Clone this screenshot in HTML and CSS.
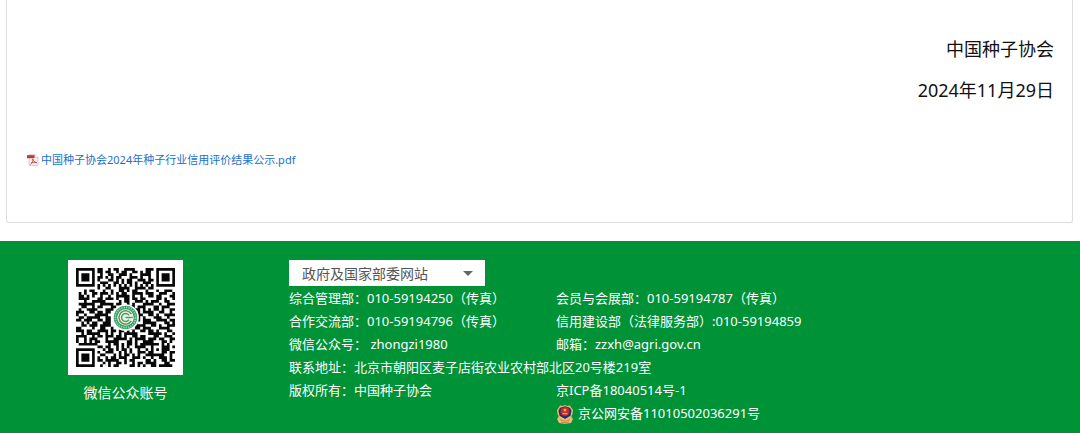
FILE: index.html
```html
<!DOCTYPE html>
<html lang="zh-CN">
<head>
<meta charset="utf-8">
<title>中国种子协会</title>
<link rel="stylesheet" href="styles.css">
</head>
<body>
<main class="article">
  <div class="signature">
    <p>中国种子协会</p>
    <p>2024年11月29日</p>
  </div>
  <a class="attachment" href="#pdf">
    <svg class="pdf-icon" viewBox="0 0 12 12" aria-hidden="true">
      <path d="M2 .5h6l3 3v8H2z" fill="#f5eeee" stroke="#c9c2c2" stroke-width=".7"/>
      <path d="M8 .5v3h3" fill="#fff" stroke="#c9c2c2" stroke-width=".7"/>
      <path d="M0 1.2h7.5v3H0z" fill="#b93a3a"/>
      <path d="M5.8 4.8c.5 2-.6 4.400-2.400 5.800M5.800 5c.4 2 2 3.600 4 3.700M3.800 9.200c1.800-1 3.800-1.300 6-.6" fill="none" stroke="#d0453f" stroke-width=".9"/>
    </svg>
    <span>中国种子协会2024年种子行业信用评价结果公示.pdf</span>
  </a>
</main>
<footer class="footer">
  <figure class="wechat">
    <svg class="qr" viewBox="-3 -3 43 43" role="img" aria-label="微信公众账号二维码">
      <path fill="#fff" d="M-3-3h43v43h-43z"/>
      <path id="modules" fill="#080808"/>
      <circle cx="18.500" cy="18.500" r="5" fill="#fff"/>
      <circle cx="18.500" cy="18.500" r="4.400" fill="#3a9c67"/>
      <circle cx="18.500" cy="18.500" r="3.800" fill="none" stroke="#a3d3b7" stroke-width=".6" stroke-dasharray=".5 .4"/>
      <circle cx="18.500" cy="18.500" r="3.100" fill="#eef7e9"/>
      <path d="M20.700 17.200a2.500 2.500 0 1 0 0 2.600M19.800 17.700a1.500 1.500 0 1 0 0 1.600M18.500 18.500h2.700" fill="none" stroke="#519b59" stroke-width=".55"/>
    </svg>
    <figcaption>微信公众账号</figcaption>
  </figure>
  <div class="info">
    <div class="picker">
      <select class="picker-box" aria-label="政府及国家部委网站">
        <option>政府及国家部委网站</option>
      </select>
    </div>
    <div class="contacts">
      <span>综合管理部：010-59194250（传真）</span>
      <span>会员与会展部：010-59194787（传真）</span>
      <span>合作交流部：010-59194796（传真）</span>
      <span>信用建设部（法律服务部）:010-59194859</span>
      <span>微信公众号： zhongzi1980</span>
      <span>邮箱：zzxh@agri.gov.cn</span>
      <span class="wide">联系地址：北京市朝阳区麦子店街农业农村部北区20号楼219室</span>
      <span>版权所有：中国种子协会</span>
      <a href="#icp">京ICP备18040514号-1</a>
      <a class="police" href="#beian">
        <svg class="badge" viewBox="0 0 18 20" aria-hidden="true">
          <path d="M3 12l-2 3 2 4 6 1 6-1 2-4-2-3z" fill="#e3b567"/>
          <path d="M9 1l2 1 3-.5 1.500 2.500 1.500 2-.5 4-2 4L9 17l-5.500-3-2-4L1 6l1.500-2L4 1.500 7 2z" fill="#e9bd76"/>
          <path d="M9 2.200l5 1.500 1.500 3-1 5L9 15l-5.500-3.300-1-5L4 3.700z" fill="#273064"/>
          <circle cx="9" cy="7.500" r="4.500" fill="#c62c2b"/>
          <path d="M9 4l.6 1.300 1.400.1-1 1 .3 1.400L9 7.100l-1.300.7.3-1.400-1-1 1.400-.1zM6.500 9h5v1.300h-5z" fill="#edb04f"/>
          <path d="M3 14.500c2 2.500 10 2.500 12 0l1 1.500-2 3H4l-2-3z" fill="#eec47c"/>
          <path d="M4 15.500c2 2 8 2 10 0M5 18c2 1 6 1 8 0" fill="none" stroke="#b5642d" stroke-width=".7"/>
        </svg>
        <span>京公网安备11010502036291号</span>
      </a>
    </div>
  </div>
</footer>
<script src="qr.js"></script>
</body>
</html>
```

FILE: styles.css
```css
* {
  box-sizing: border-box;
}

body {
  margin: 0;
  background: #fff;
  font-family: "Noto Sans", "Noto Sans CJK SC", sans-serif;
  font-size: 13px;
}

a {
  color: inherit;
  text-decoration: none;
}

.article {
  margin: 0 7px 18px 6px;
  padding: 29px 18px 54px 20px;
  border: 1px solid #ddd;
  border-top: 0;
  border-radius: 0 0 3px 3px;
}

.signature {
  text-align: right;
  font-size: 18px;
  line-height: 41px;
  color: #111;
}

.signature p {
  margin: 0;
}

.attachment {
  display: flex;
  align-items: center;
  gap: 2px;
  margin-top: 40px;
  font-size: 11px;
  line-height: 17px;
  color: #1a6fc9;
}

.pdf-icon {
  width: 12px;
  height: 12px;
}

.footer {
  display: flex;
  gap: 106px;
  padding: 19px 68px 8px;
  background: #009237;
  color: #fff;
}

.wechat {
  flex: none;
  width: 115px;
  margin: 0;
  text-align: center;
  font-size: 14px;
  line-height: 20px;
}

.qr {
  display: block;
  width: 100%;
  margin-bottom: 8px;
}

.info {
  flex: 1;
}

.picker {
  position: relative;
  width: 196px;
}

.picker::after {
  content: "";
  position: absolute;
  top: 11px;
  right: 12px;
  border: 5px solid transparent;
  border-top-color: #666;
  border-bottom: 0;
  pointer-events: none;
}

.picker-box {
  display: block;
  width: 100%;
  height: 26px;
  padding: 0 30px 0 13px;
  border: 0;
  border-radius: 0;
  appearance: none;
  background: #fff;
  color: #555;
  font: inherit;
  font-size: 14px;
}

.contacts {
  display: grid;
  grid-template-columns: 267px 1fr;
  padding-top: 1px;
  line-height: 23px;
}

.wide {
  grid-column: 1 / -1;
}

.police {
  grid-column: 2;
  display: flex;
  align-items: center;
  gap: 4px;
}

.badge {
  width: 18px;
  height: 20px;
}
```

FILE: qr.js
```js
const rows = [
  "#######.##..#.##..####....###.#######",
  "#.....#.##.##..#.##..##.#.##..#.....#",
  "#.###.#..#..##..###.#...####..#.###.#",
  "#.###.#.##.#.#.##...###.#..#..#.###.#",
  "#.###.#.#...##.#.#.##..###.##.#.###.#",
  "#.....#..###..##.#.##.#..###..#.....#",
  "#######.#.#.#.#.#.#.#.#.#.#.#.#######",
  "........#..##...####..####.##........",
  "...#.##...#..#..##.#.##...#...#..###.",
  ".#.#..##.###.#.#.##..####.###..###..#",
  ".##.#.#..#..#..#####.#..#..##.##...##",
  ".####...##.###.#..##.##.##....##.#..#",
  "...#..#####.....#.##..###.#.###..##..",
  ".######..#####.##..#.#...####..#..###",
  "..##..#.##...##.....##.###...##.###..",
  ".#..####...###........##.#.#.##.#..##",
  "###..##.##.##..........#.####..##..#.",
  "#..#...#####...........##..##.#..####",
  ".##.#####..##..........#.#...###..#..",
  "##.###..##.##.........##.###..####.##",
  "..#.#.##..###.........#..#####...##.#",
  "..##.###.####.........####..##.#..###",
  "##....#..##..#.....##.##.###...####..",
  "###.##..####.##.##.#.#..##.##.#...##.",
  "..#.#####..#.#..#.#####....#####.#..#",
  "####..#.##.###.##.#..##.##...##..###.",
  "#..#.###...#..#####.#.####.###.##..##",
  "#..#.#.##..#####...##.#..####...##.#.",
  ".#######....#.##.#.##.#.#######.#.#..",
  "........##.##..#.#.#..####..#...###.#",
  "#######...#.##.#.##.#..#..#.#.#.###..",
  "#.....#.#..###..#.#.#..###.##...##.##",
  "#.###.#..##...#.#.##.#.#..#######..#.",
  "#.###.#.#..#.##.###..###.#..#..###.#.",
  "#.###.#.##.#####..#.##....##.#..##.##",
  "#.....#...#.#..##.#..#.##.####...##..",
  "#######..#..#.##....##.#.#..##.#####."
];

const path = rows
  .flatMap((row, y) =>
    [...row.matchAll(/#+/g)].map(
      (run) => `M${run.index} ${y}h${run[0].length}v1h-${run[0].length}z`
    )
  )
  .join("");

document.getElementById("modules").setAttribute("d", path);
```
